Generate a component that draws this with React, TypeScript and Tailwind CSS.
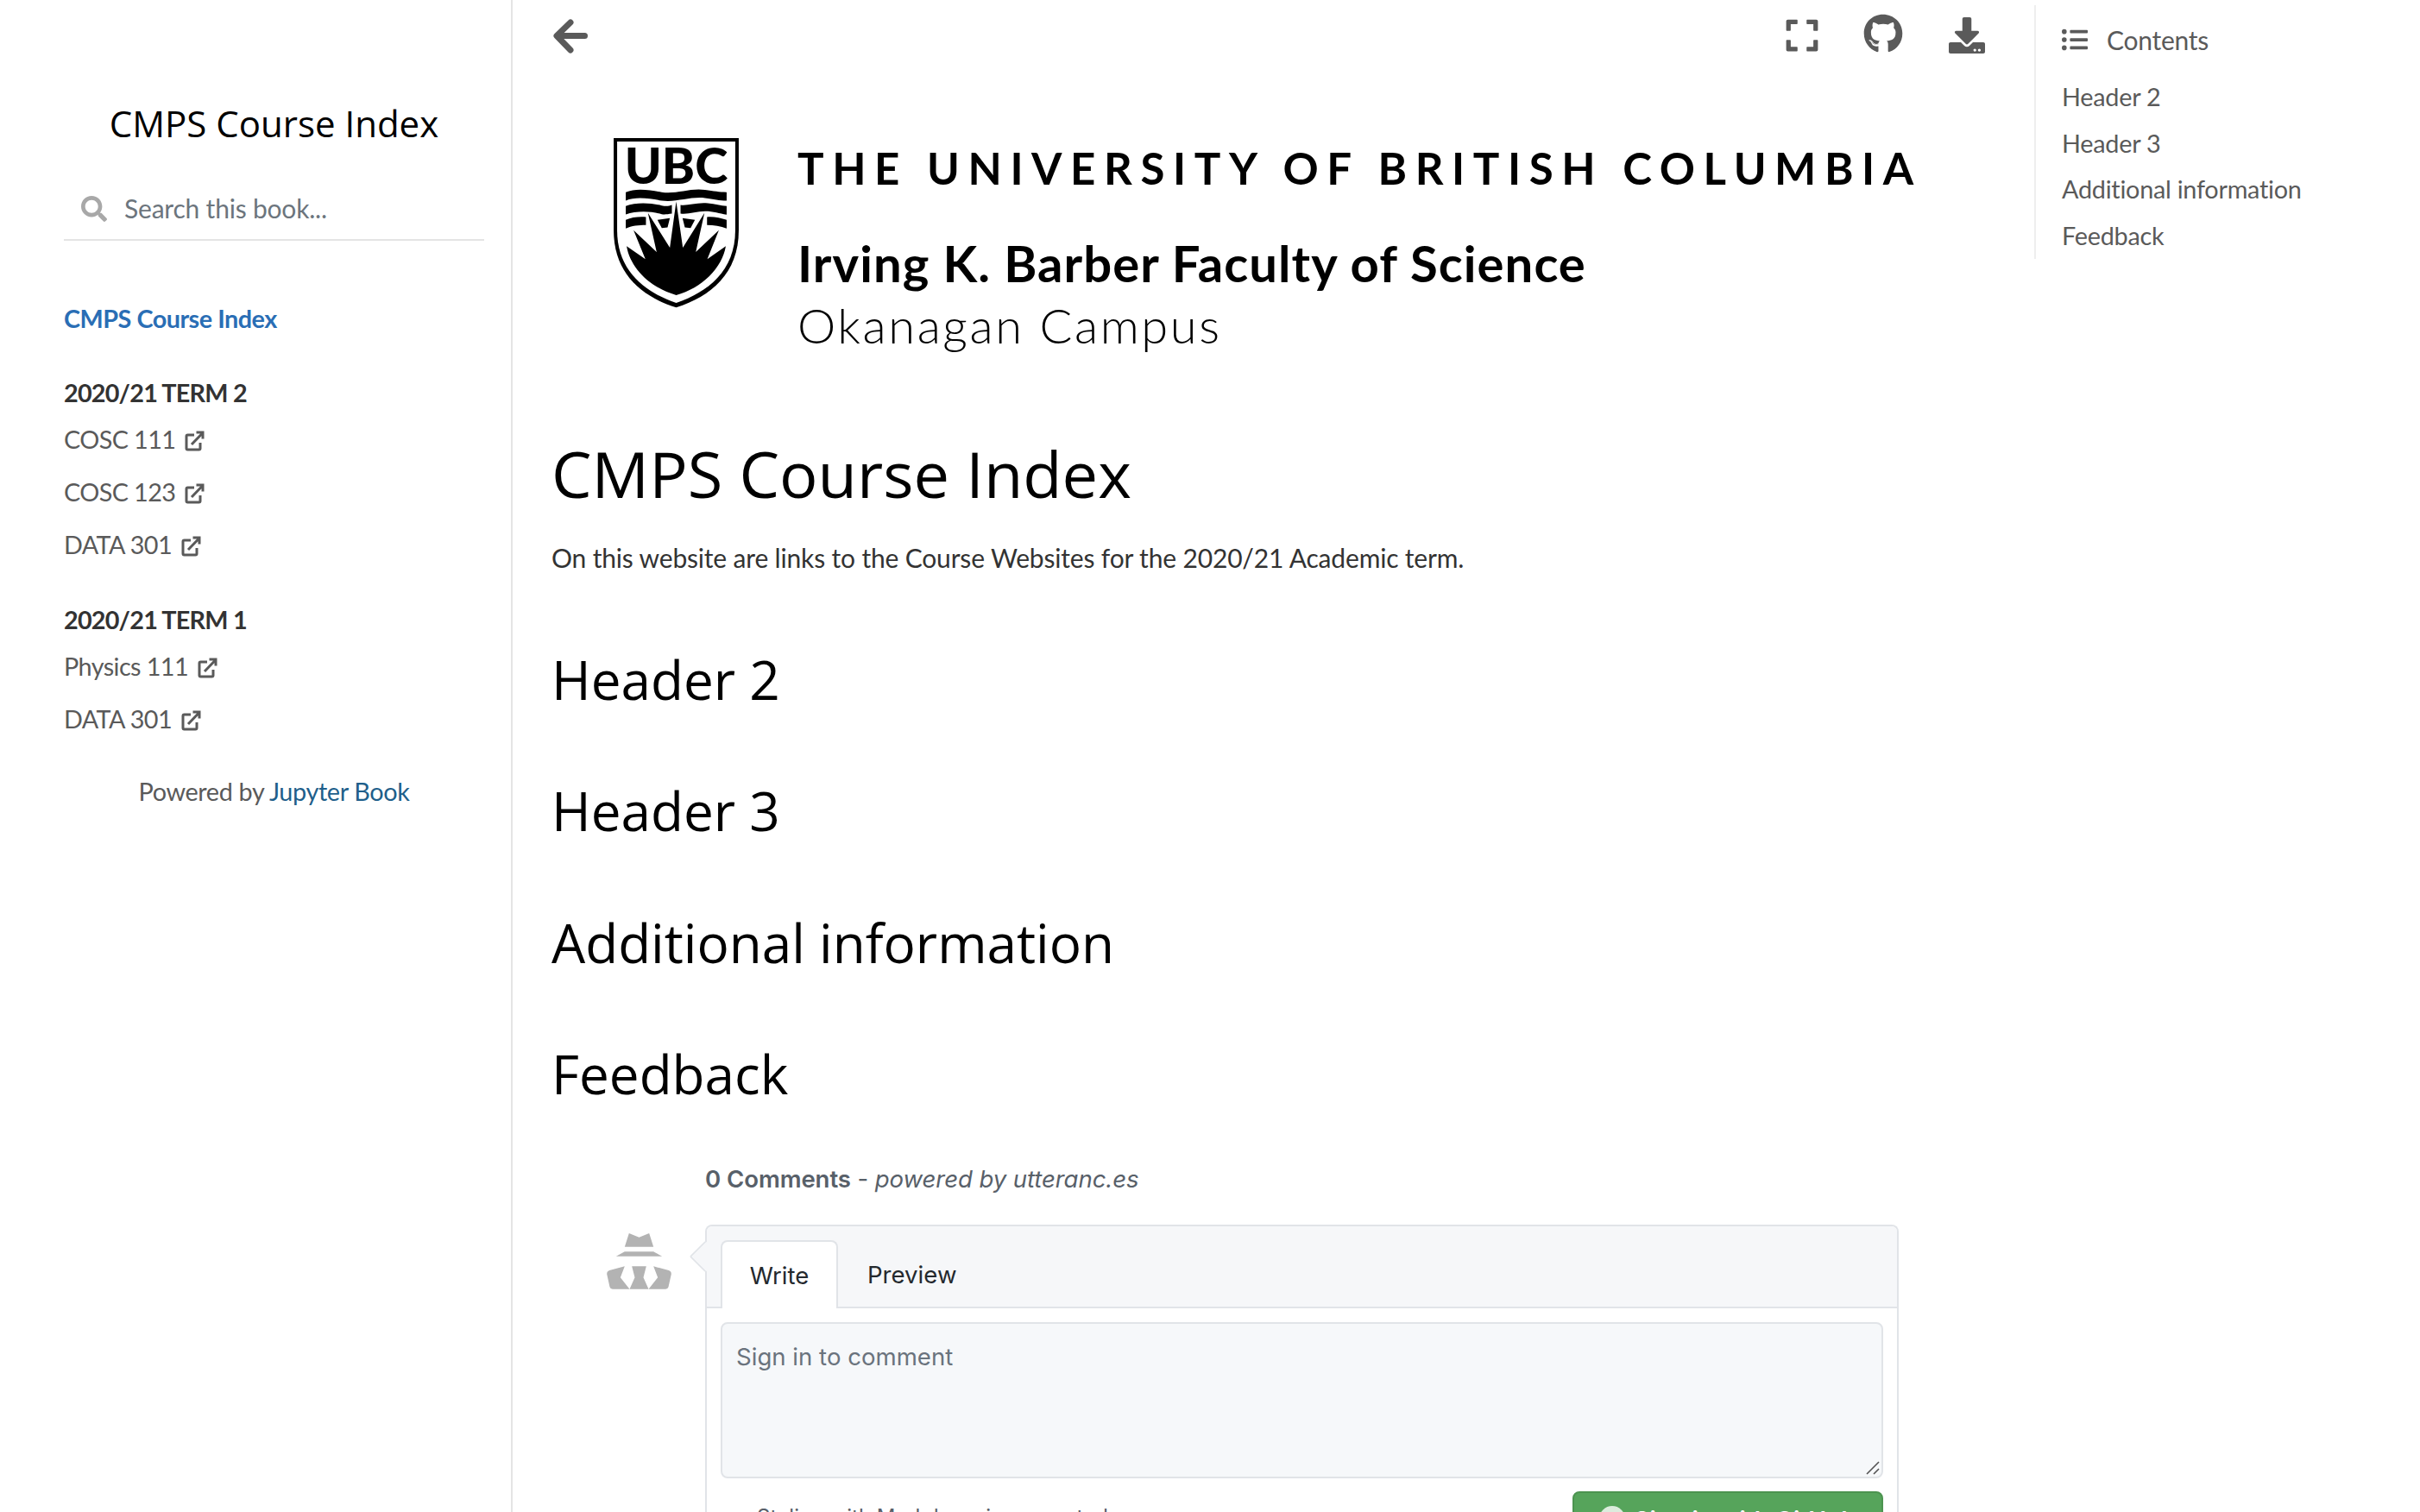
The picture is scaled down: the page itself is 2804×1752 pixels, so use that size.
import { FaDownload, FaExpand, FaGithub, FaListUl, FaSearch } from "react-icons/fa";

function ExternalIcon() {
  return (
    <svg viewBox="0 0 24 24" className="ml-[10px] inline-block h-[24px] w-[24px] align-[-3px] text-[#5a5a5a]" fill="none" stroke="currentColor" strokeWidth="3">
      <path d="M12 5H4.5a1.5 1.5 0 0 0-1.5 1.5v14A1.5 1.5 0 0 0 4.5 22h13a1.5 1.5 0 0 0 1.5-1.5V14" />
      <path d="M9 16 22 2.5M14.5 2H22v7.5" />
    </svg>
  );
}

function SideLink({ label, className }: { label: string; className: string }) {
  return (
    <a className={`block h-[61px] leading-[61px] text-[28.8px] tracking-[-0.6px] text-[#5a5a5a] ${className}`}>
      {label}
      <ExternalIcon />
    </a>
  );
}

function UbcShield() {
  return (
    <svg viewBox="273 480 434 590" className="h-[197px] w-[145px] shrink-0 overflow-visible">
      <path d="M273 480H707V800C707 950 610 1030 490 1068C370 1030 273 950 273 800Z" fill="#000" />
      <path d="M285 492H695V800C695 940 600 1015 490 1052C380 1015 285 940 285 800Z" fill="#fff" />
      <text x="311" y="640" fontFamily="Lato, sans-serif" fontWeight="900" fontSize="172" textLength="358" lengthAdjust="spacingAndGlyphs">UBC</text>
      <path d="M315 668C350 652 400 660 440 668C490 676 540 652 590 660C620 664 640 668 665 668V697C640 697 620 692 590 688C540 682 490 704 440 697C400 690 350 682 315 697Z" fill="#000" />
      <path d="M315 716C350 702 400 704 440 714C455 718 465 716 475 712V742C460 744 450 746 440 744C400 732 350 732 315 745ZM505 712C530 716 560 702 600 706C625 708 645 714 665 716V746C640 742 620 734 590 734C560 734 530 746 505 742Z" fill="#000" />
      <path d="M315 764C335 755 360 752 385 754V782C360 782 335 784 315 794ZM425 764 468 758 460 790 440 792ZM512 758 555 764 540 792 520 790ZM597 754C620 752 645 758 665 764V794C645 786 620 782 597 782Z" fill="#000" />
      <path d="M318 855 383 900 342 800 422 875 392 740 468 860 490 700 513 860 588 740 558 875 638 800 598 900 662 855C650 930 580 1000 490 1025C400 1000 330 930 318 855Z" fill="#000" stroke="#fff" strokeWidth="10" paintOrder="stroke" />
    </svg>
  );
}

function SpyAvatar() {
  return (
    <svg viewBox="38 28 224 195" className="h-[65px] w-[75px]" fill="#b3b3b3">
      <path d="M100 75 115 28 150 42 185 28 200 75Z" />
      <path d="M70 108 100 92H200L230 108Z" />
      <path d="M100 143 47 157Q38 160 38 170L48 215Q50 222 58 222H117L85 182Z" />
      <path d="M200 143 253 157Q262 160 262 170L252 215Q250 222 242 222H183L215 182Z" />
      <path d="M125 143H175L165 182 183 222H117L135 182Z" />
    </svg>
  );
}

const headingClass = "font-['Open_Sans'] font-normal text-black text-[62px] leading-[88px]";

export default function App() {
  return (
    <div className="flex h-[1752px] w-[2804px] overflow-hidden bg-white font-['Lato'] text-[#333]">
      <aside className="h-full w-[594px] shrink-0 border-r-2 border-[#e4e4e4] pl-[74px] pr-[31px]">
        <h1 className="pt-[116px] text-center font-['Open_Sans'] text-[42px] font-normal leading-[54px] text-black">CMPS Course Index</h1>
        <div className="mt-[24px] flex h-[85px] items-center border-b-2 border-[#e4e4e4] pl-[20px] pt-[12px]">
          <FaSearch className="text-[30px] text-[#a8a8a8]" />
          <span className="ml-[20px] text-[30px] tracking-[-0.2px] text-[#6c757d]">Search this book...</span>
        </div>
        <a className="mt-[70px] block text-[28.8px] font-bold leading-[40px] tracking-[-0.5px] text-[#2a6eb5]">CMPS Course Index</a>
        <p className="mt-[46px] text-[28.8px] font-bold leading-[40px] tracking-[-0.8px] text-[#333]">2020/21 TERM 2</p>
        <SideLink label="COSC 111" className="mt-[4px]" />
        <SideLink label="COSC 123" className="" />
        <SideLink label="DATA 301" className="" />
        <p className="mt-[36px] text-[28.8px] font-bold leading-[40px] tracking-[-0.8px] text-[#333]">2020/21 TERM 1</p>
        <SideLink label="Physics 111" className="mt-[4px]" />
        <SideLink label="DATA 301" className="" />
        <p className="mt-[33px] text-center text-[28.8px] leading-[40px] tracking-[-0.35px] text-[#5a5a5a]">
          Powered by <a className="text-[#1f5f8b]">Jupyter Book</a>
        </p>
      </aside>

      <main className="min-w-0 flex-1 pl-[45px]">
        <div className="flex h-[160px] items-start pr-[57px] text-[#5a5a5a]">
          <svg viewBox="0 0 40 40" className="ml-[2px] mt-[22px] h-[40px] w-[40px]" fill="none" stroke="currentColor" strokeWidth="7" strokeLinecap="round" strokeLinejoin="round">
            <path d="M36.5 19.5H5M20 4 4 19.5 20 36" />
          </svg>
          <div className="ml-auto mt-[16px] flex items-start">
            <FaExpand className="mt-[4px] text-[42px]" />
            <FaGithub className="ml-[50px] text-[46px]" />
            <FaDownload className="ml-[53px] mt-[4px] text-[42px]" />
          </div>
        </div>

        <div className="flex items-start pl-[72px]">
          <UbcShield />
          <div className="ml-[68px] text-black">
            <p className="mt-[10px] whitespace-nowrap text-[51px] font-bold leading-[50px] tracking-[9.6px]">THE UNIVERSITY OF BRITISH COLUMBIA</p>
            <p className="mt-[55px] whitespace-nowrap text-[58px] font-bold leading-[60px] tracking-[1.05px]">Irving K. Barber Faculty of Science</p>
            <p className="mt-[12px] whitespace-nowrap text-[56px] font-light leading-[60px] tracking-[2.6px]">Okanagan Campus</p>
          </div>
        </div>

        <h1 className="mt-[90px] font-['Open_Sans'] text-[74px] font-normal leading-[104px] text-black">CMPS Course Index</h1>
        <p className="mt-[21px] text-[30px] leading-[48px] tracking-[-0.17px] text-[#333]">On this website are links to the Course Websites for the 2020/21 Academic term.</p>
        <h2 className={`mt-[73px] ${headingClass}`}>Header 2</h2>
        <h2 className={`mt-[64px] ${headingClass}`}>Header 3</h2>
        <h2 className={`mt-[65px] ${headingClass}`}>Additional information</h2>
        <h2 className={`mt-[64px] ${headingClass}`}>Feedback</h2>

        <section className="ml-[64px] mt-[58px] w-[1498px] pl-[114px] font-['Inter'] text-[#586069]">
          <p className="text-[27.6px] leading-[40px] tracking-[-0.1px] text-[#586069]">
            <strong className="font-semibold">0 Comments</strong> - <em>powered by utteranc.es</em>
          </p>
        </section>
        <section className="ml-[64px] mt-[33px] flex w-[1497px] items-start font-['Inter']">
          <div className="w-[114px] shrink-0 pt-[10px]">
            <SpyAvatar />
          </div>
          <div className="relative min-w-0 flex-1 rounded-t-[8px] border-2 border-b-0 border-[#e1e4e8]">
            <div className="absolute left-[-15px] top-[22px] h-[26px] w-[26px] rotate-45 rounded-[2px] border-b-2 border-l-2 border-[#e1e4e8] bg-[#f6f7f9]" />
            <div className="relative flex h-[95px] items-end rounded-t-[6px] border-b-2 border-[#e1e4e8] bg-[#f6f7f9] pl-[16px]">
              <div className="mb-[-2px] flex h-[79px] w-[136px] items-center justify-center rounded-t-[8px] border-2 border-b-0 border-[#e1e4e8] bg-white pt-[3px] text-[27.6px] text-[#24292e]">Write</div>
              <div className="mb-[-2px] flex h-[79px] items-center pl-[34px] pt-[3px] text-[27.6px] text-[#24292e]">Preview</div>
            </div>
            <div className="px-[16px] pt-[16px]">
              <div className="relative h-[181px] rounded-[8px] border-2 border-[#e1e4e8] bg-[#f6f8fa] px-[16px] py-[18px] text-[27.6px] leading-[40px] text-[#6a737d]">
                Sign in to comment
                <svg viewBox="0 0 16 16" className="absolute bottom-[2px] right-[2px] h-[16px] w-[16px]" stroke="#555" strokeWidth="1.6">
                  <path d="M1 15 15 1M9 15 15 9" />
                </svg>
              </div>
              <div className="mt-[15px] flex items-start">
                <span className="pl-[42px] pt-[14px] text-[24px] leading-[32px] text-[#586069]">Styling with Markdown is supported</span>
                <div className="ml-auto flex h-[64px] w-[360px] items-start justify-center gap-[10px] rounded-[8px] border-2 border-[#4c9450] bg-[#56a45b] pt-[14px] text-[28px] font-semibold text-white">
                  <span className="mt-[1px] h-[30px] w-[30px] rounded-full bg-[#dcecdd]" />
                  <span className="leading-[36px]">Sign in with GitHub</span>
                </div>
              </div>
            </div>
          </div>
        </section>
      </main>

      <nav className="mt-[6px] h-[294px] w-[447px] shrink-0 border-l-2 border-[#eeeeee] pl-[30px] text-[28.8px] tracking-[-0.25px] text-[#5a5a5a]">
        <div className="flex h-[80px] items-center gap-[22px]">
          <FaListUl className="text-[30px]" />
          <span className="text-[30px]">Contents</span>
        </div>
        <a className="block leading-[53.5px]">Header 2</a>
        <a className="block leading-[53.5px]">Header 3</a>
        <a className="block leading-[53.5px]">Additional information</a>
        <a className="block leading-[53.5px]">Feedback</a>
      </nav>
    </div>
  );
}
